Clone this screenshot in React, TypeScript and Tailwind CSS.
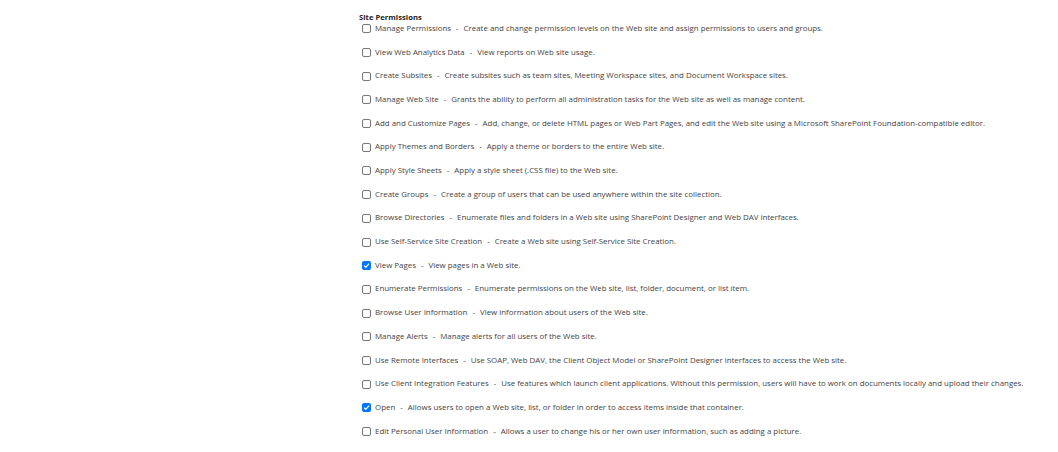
import React from 'react';

const perms: [string, string, boolean][] = [
  ['Manage Permissions', 'Create and change permission levels on the Web site and assign permissions to users and groups.', false],
  ['View Web Analytics Data', 'View reports on Web site usage.', false],
  ['Create Subsites', 'Create subsites such as team sites, Meeting Workspace sites, and Document Workspace sites.', false],
  ['Manage Web Site', 'Grants the ability to perform all administration tasks for the Web site as well as manage content.', false],
  ['Add and Customize Pages', 'Add, change, or delete HTML pages or Web Part Pages, and edit the Web site using a Microsoft SharePoint Foundation-compatible editor.', false],
  ['Apply Themes and Borders', 'Apply a theme or borders to the entire Web site.', false],
  ['Apply Style Sheets', 'Apply a style sheet (.CSS file) to the Web site.', false],
  ['Create Groups', 'Create a group of users that can be used anywhere within the site collection.', false],
  ['Browse Directories', 'Enumerate files and folders in a Web site using SharePoint Designer and Web DAV interfaces.', false],
  ['Use Self-Service Site Creation', 'Create a Web site using Self-Service Site Creation.', false],
  ['View Pages', 'View pages in a Web site.', true],
  ['Enumerate Permissions', 'Enumerate permissions on the Web site, list, folder, document, or list item.', false],
  ['Browse User Information', 'View information about users of the Web site.', false],
  ['Manage Alerts', 'Manage alerts for all users of the Web site.', false],
  ['Use Remote Interfaces', 'Use SOAP, Web DAV, the Client Object Model or SharePoint Designer interfaces to access the Web site.', false],
  ['Use Client Integration Features', 'Use features which launch client applications. Without this permission, users will have to work on documents locally and upload their changes.', false],
  ['Open', 'Allows users to open a Web site, list, or folder in order to access items inside that container.', true],
  ['Edit Personal User Information', 'Allows a user to change his or her own user information, such as adding a picture.', false],
];

function Box({ checked }: { checked: boolean }) {
  if (checked) {
    return (
      <span className="w-[9px] h-[9px] rounded-[2px] bg-[#0075ff] flex items-center justify-center shrink-0">
        <svg width="7" height="7" viewBox="0 0 10 10">
          <path d="M1.5 5.2 L4 7.6 L8.6 2.4" fill="none" stroke="#fff" strokeWidth="1.8" />
        </svg>
      </span>
    );
  }
  return <span className="w-[9px] h-[9px] rounded-[2px] border border-[#767676] bg-white shrink-0" />;
}

export default function App() {
  return (
    <div className="w-[1058px] h-[452px] bg-white pl-[359px] pt-[11px] text-[#444] font-['Open_Sans',sans-serif] text-[7.9px]">
      <div className="text-[#262626] font-bold h-[12px] leading-[12px] text-[7.7px]">Site Permissions</div>
      <div className="flex flex-col -mt-[6px]">
        {perms.map(([name, desc, checked]) => (
          <div key={name} className="flex items-center h-[23.7px] pl-[3px]">
            <Box checked={checked} />
            <span className="ml-[4px] whitespace-nowrap">
              {name}
              <span className="mx-[5px]">-</span>
              {desc}
            </span>
          </div>
        ))}
      </div>
    </div>
  );
}
